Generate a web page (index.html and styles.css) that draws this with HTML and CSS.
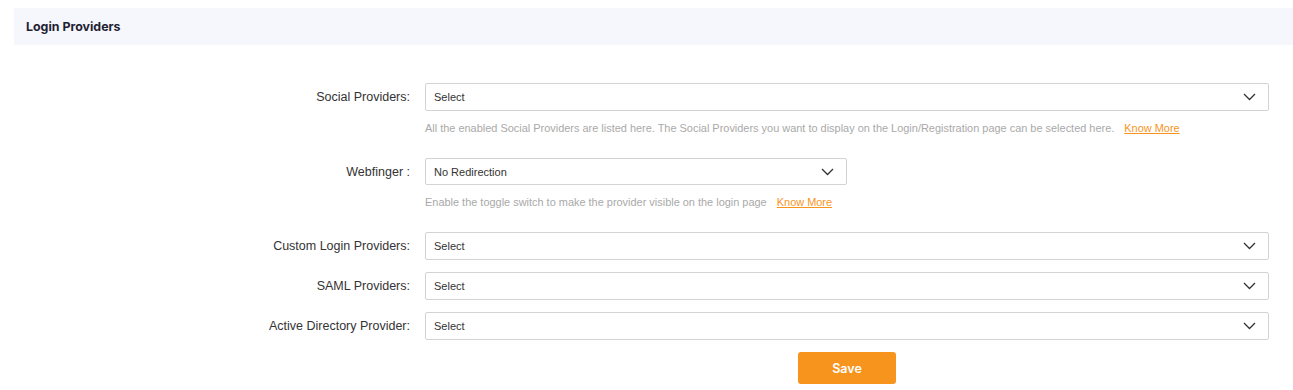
FILE: index.html
```html
<!DOCTYPE html>
<html lang="en">
<head>
  <meta charset="UTF-8">
  <meta name="viewport" content="width=device-width, initial-scale=1.0">
  <title>Login Providers</title>
  <link rel="stylesheet" href="styles.css">
</head>
<body>
  <header class="panel-head">Login Providers</header>

  <form class="providers">
    <label class="field-label">Social Providers:</label>
    <div class="field">
      <div class="select">
        <span>Select</span>
        <svg class="chevron" width="13" height="8" viewBox="0 0 13 8"><path d="M1 1l5.5 5.5L12 1" fill="none" stroke="#333" stroke-width="1.3"/></svg>
      </div>
      <p class="hint">All the enabled Social Providers are listed here. The Social Providers you want to display on the Login/Registration page can be selected here. <a href="#">Know More</a></p>
    </div>

    <label class="field-label">Webfinger :</label>
    <div class="field">
      <div class="select short">
        <span>No Redirection</span>
        <svg class="chevron" width="13" height="8" viewBox="0 0 13 8"><path d="M1 1l5.5 5.5L12 1" fill="none" stroke="#333" stroke-width="1.3"/></svg>
      </div>
      <p class="hint">Enable the toggle switch to make the provider visible on the login page <a href="#">Know More</a></p>
    </div>

    <label class="field-label">Custom Login Providers:</label>
    <div class="field">
      <div class="select">
        <span>Select</span>
        <svg class="chevron" width="13" height="8" viewBox="0 0 13 8"><path d="M1 1l5.5 5.5L12 1" fill="none" stroke="#333" stroke-width="1.3"/></svg>
      </div>
    </div>

    <label class="field-label">SAML Providers:</label>
    <div class="field">
      <div class="select">
        <span>Select</span>
        <svg class="chevron" width="13" height="8" viewBox="0 0 13 8"><path d="M1 1l5.5 5.5L12 1" fill="none" stroke="#333" stroke-width="1.3"/></svg>
      </div>
    </div>

    <label class="field-label">Active Directory Provider:</label>
    <div class="field">
      <div class="select">
        <span>Select</span>
        <svg class="chevron" width="13" height="8" viewBox="0 0 13 8"><path d="M1 1l5.5 5.5L12 1" fill="none" stroke="#333" stroke-width="1.3"/></svg>
      </div>
    </div>

    <div class="actions">
      <button type="button" class="save">Save</button>
    </div>
  </form>
</body>
</html>
```

FILE: styles.css
```css
* {
  margin: 0;
  padding: 0;
  box-sizing: border-box;
}
body {
  background: #fff;
  color: #333;
  font-family: 'Liberation Sans', Arial, sans-serif;
}
.panel-head {
  margin: 8px 0 0 14px;
  height: 37px;
  padding-left: 12px;
  display: flex;
  align-items: center;
  background: #f6f7fc;
  font-family: Inter, 'Noto Sans', sans-serif;
  font-weight: 700;
  font-size: 12.4px;
  color: #1f2233;
}
.providers {
  display: grid;
  grid-template-columns: 410px 1fr;
  column-gap: 15px;
  row-gap: 12px;
  padding: 38px 24px 0 0;
}
.field-label {
  text-align: right;
  font-size: 12.5px;
  color: #333;
  height: 28px;
  line-height: 28px;
}
.select {
  height: 28px;
  border: 1px solid #d3d3d3;
  border-radius: 2px;
  display: flex;
  align-items: center;
  justify-content: space-between;
  padding: 0 12px 0 8px;
  font-size: 11px;
  color: #333;
}
.select.short {
  width: 422px;
  height: 27px;
}
.hint {
  height: 14px;
  margin-top: 10px;
  margin-bottom: 11px;
  font-size: 10.95px;
  color: #a9a9a9;
  line-height: 14px;
}
.hint a {
  color: #f7941d;
  margin-left: 7px;
}
.actions {
  grid-column: 2;
  padding-left: 373px;
}
.save {
  width: 98px;
  height: 32px;
  border: none;
  border-radius: 3px;
  background: #f7941d;
  color: #fff;
  font-family: Inter, 'Noto Sans', sans-serif;
  font-weight: 600;
  font-size: 12.5px;
  cursor: pointer;
}
```
